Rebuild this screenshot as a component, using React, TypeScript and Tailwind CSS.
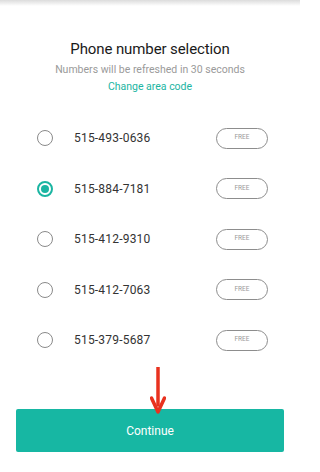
const numbers = ["515-493-0636", "515-884-7181", "515-412-9310", "515-412-7063", "515-379-5687"];

const Radio = ({ checked }: { checked: boolean }) =>
  checked ? (
    <span className="flex h-[16px] w-[16px] items-center justify-center rounded-full border-2 border-[#1bb5a2]">
      <span className="h-[8px] w-[8px] rounded-full bg-[#1bb5a2]" />
    </span>
  ) : (
    <span className="h-[16px] w-[16px] rounded-full border-[1.5px] border-[#8a8a8a]" />
  );

export default function App() {
  return (
    <div
      className="relative flex h-[472px] w-[300px] flex-col overflow-hidden bg-white"
      style={{ fontFamily: 'Roboto, "Noto Sans", sans-serif' }}
    >
      <div className="h-[6px] bg-gradient-to-b from-[#dcdcdc] to-white" />

      <div className="flex flex-col items-center pt-[33px]">
        <h1 className="text-[15px] font-normal leading-[20px] tracking-[-0.1px] text-[#1a1a1a]">Phone number selection</h1>
        <p className="mt-[4px] text-[10.5px] leading-[14px] text-[#9a9a9a]">Numbers will be refreshed in 30 seconds</p>
        <p className="mt-[3px] text-[10.5px] leading-[14px] text-[#1bb5a2]">Change area code</p>
      </div>

      <ul className="mt-[19px] flex flex-col">
        {numbers.map((n, i) => (
          <li key={n} className="flex h-[50.5px] items-center pl-[37px] pr-[32px]">
            <Radio checked={i === 1} />
            <span className="ml-[21px] text-[12px] tracking-[0.2px] text-[#333]">{n}</span>
            <span className="ml-auto flex h-[21px] w-[52px] items-center justify-center rounded-full border border-[#8d8d8d] text-[6.5px] text-[#9a9a9a]">
              FREE
            </span>
          </li>
        ))}
      </ul>

      <div className="flex-1" />

      <div className="relative px-[16px] pb-[20px]">
        <button className="h-[43px] w-full rounded-[2px] bg-[#17b7a3] text-[12px] text-white">Continue</button>
        <svg className="absolute left-[150px] top-[-42px]" width="16" height="48" viewBox="0 0 16 48">
          <line x1="8" y1="0" x2="8" y2="38" stroke="#e8321f" strokeWidth="3.5" strokeLinecap="round" />
          <path d="M1.5 31 L8 45 L14.5 31" fill="none" stroke="#e8321f" strokeWidth="3.5" strokeLinecap="round" strokeLinejoin="round" />
        </svg>
      </div>
    </div>
  );
}
